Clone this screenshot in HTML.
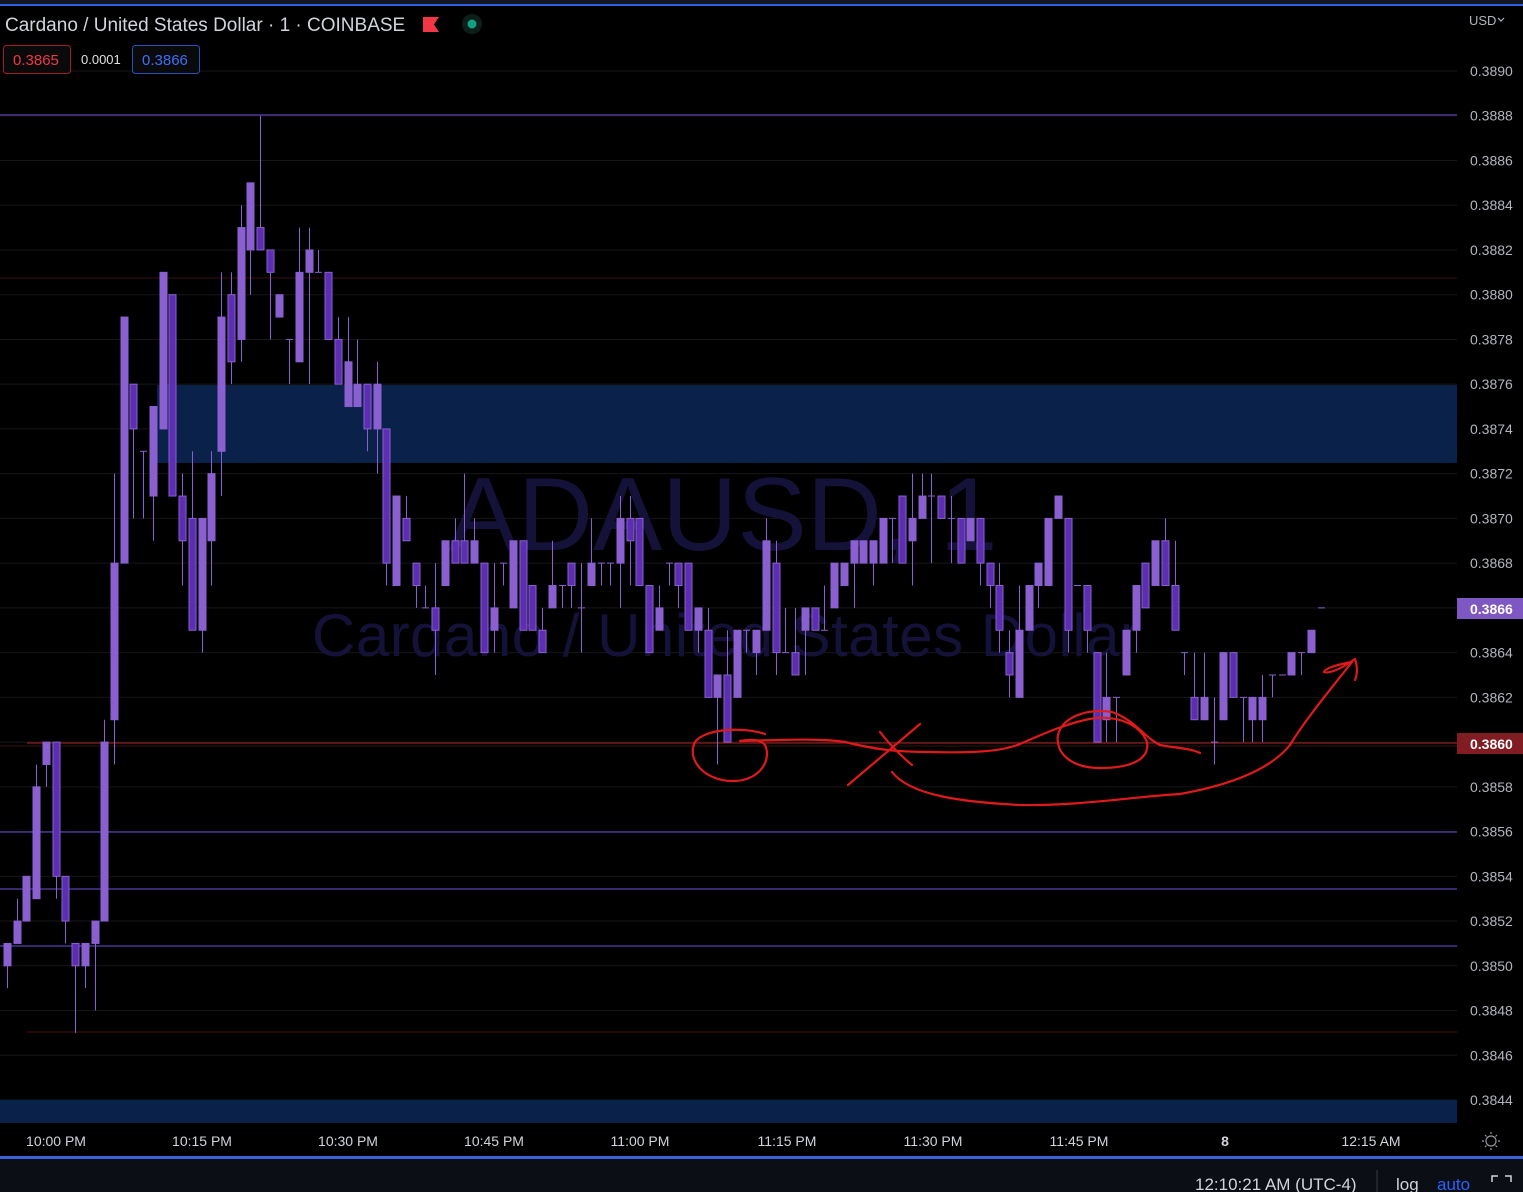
<!DOCTYPE html>
<html><head><meta charset="utf-8">
<style>
html,body{margin:0;padding:0;background:#000;width:1523px;height:1192px;overflow:hidden;font-family:"Liberation Sans",sans-serif;}
svg{position:absolute;left:0;top:0}
</style></head><body>
<svg id="s" width="1523" height="1192" xmlns="http://www.w3.org/2000/svg">
<rect x="0" y="0" width="1523" height="1192" fill="#000"/>
<rect x="0" y="0" width="1523" height="4" fill="#131722"/>
<rect x="0" y="4" width="1523" height="2" fill="#2f5fe0"/>
<g id="grid" stroke="#161616" stroke-width="1"></g>
<text x="723" y="550" font-size="104" fill="#15123a" text-anchor="middle" font-family="Liberation Sans, sans-serif">ADAUSD, 1</text>
<text x="312" y="656" font-size="60" fill="#15123a" font-family="Liberation Sans, sans-serif" textLength="828">Cardano / United States Dollar</text>
<rect x="157" y="385" width="1300" height="78" fill="#0a2249"/>
<rect x="0" y="1100" width="1457" height="23" fill="#0a2249"/>
<line x1="0" y1="115" x2="1457" y2="115" stroke="#5b3fb0" stroke-width="1.2"/>
<line x1="0" y1="278" x2="1457" y2="278" stroke="#3a1010" stroke-width="1"/>
<line x1="27" y1="743" x2="1457" y2="743" stroke="#8b1c1c" stroke-width="1.3"/>
<line x1="0" y1="746" x2="1457" y2="746" stroke="#3a1010" stroke-width="1"/>
<line x1="0" y1="832" x2="1457" y2="832" stroke="#5b3fb0" stroke-width="1.2"/>
<line x1="0" y1="889" x2="1457" y2="889" stroke="#5b3fb0" stroke-width="1.2"/>
<line x1="0" y1="946" x2="1457" y2="946" stroke="#5b3fb0" stroke-width="1.2"/>
<line x1="27" y1="1032" x2="1457" y2="1032" stroke="#4a1414" stroke-width="1"/>
<g id="candles"></g>
<g fill="none" stroke="#e01a1a" stroke-width="2.2" stroke-linecap="round" stroke-linejoin="round">
<path d="M765 734 C745 727,705 728,695 742 C686 760,705 782,735 781 C760 780,772 760,765 745 C760 738,745 740,740 741 C780 740,820 738,845 742 C870 748,890 752,930 752 C970 753,1000 752,1020 744 C1045 733,1070 722,1095 718 C1120 716,1140 725,1147 742 C1150 760,1130 768,1100 768 C1070 768,1055 752,1058 735 C1062 718,1085 708,1112 712 C1135 720,1145 738,1160 745 C1175 748,1190 748,1200 753"/>
<path d="M920 724 L848 785"/>
<path d="M880 732 C890 745,900 755,912 765"/>
<path d="M892 772 C910 795,960 802,1020 805 C1080 806,1130 797,1180 794 C1230 785,1270 770,1290 745 C1305 720,1330 690,1352 662"/>
<path d="M1352 662 C1340 664,1325 668,1324 672 C1330 674,1342 668,1355 659 C1358 668,1357 675,1355 680"/>
</g>
<g id="axis" font-size="14" fill="#b2b5be" font-family="Liberation Sans, sans-serif"></g>
<rect x="1457" y="598" width="66" height="21" fill="#7e57c2"/>
<text x="1470" y="614" font-size="14" fill="#fff" font-weight="bold">0.3866</text>
<rect x="1457" y="733" width="66" height="21" fill="#801c22"/>
<text x="1470" y="749" font-size="14" fill="#fff" font-weight="bold">0.3860</text>
<text x="1469" y="25" font-size="13" fill="#b2b5be">USD</text>
<path d="M1498 18 l3 3 l3 -3" stroke="#b2b5be" fill="none" stroke-width="1.2"/>
<g font-size="14" fill="#d1d4dc" text-anchor="middle">
<text x="56" y="1146">10:00 PM</text>
<text x="202" y="1146">10:15 PM</text>
<text x="348" y="1146">10:30 PM</text>
<text x="494" y="1146">10:45 PM</text>
<text x="640" y="1146">11:00 PM</text>
<text x="787" y="1146">11:15 PM</text>
<text x="933" y="1146">11:30 PM</text>
<text x="1079" y="1146">11:45 PM</text>
<text x="1225" y="1146" font-weight="bold">8</text>
<text x="1371" y="1146">12:15 AM</text>
</g>
<g stroke="#9598a1" stroke-width="1.2" fill="none">
<circle cx="1491" cy="1141" r="5"/>
<path d="M1491 1132v2M1491 1148v2M1482 1141h2M1498 1141h2M1485 1135l1.5 1.5M1495.5 1145.5l1.5 1.5M1485 1147l1.5-1.5M1495.5 1136.5l1.5-1.5"/>
</g>
<rect x="0" y="1156" width="1523" height="36" fill="#0c0e15"/>
<rect x="0" y="1156" width="1523" height="3" fill="#3a62d8"/>
<text x="1195" y="1190" font-size="17" fill="#d1d4dc">12:10:21 AM (UTC-4)</text>
<line x1="1377" y1="1170" x2="1377" y2="1192" stroke="#363a45"/>
<text x="1396" y="1190" font-size="17" fill="#d1d4dc">log</text>
<text x="1437" y="1190" font-size="17" fill="#2962ff">auto</text>
<path d="M1492 1182v-6h6M1505 1176h6v6" stroke="#d1d4dc" stroke-width="1.5" fill="none"/>
<text x="5" y="31" font-size="19" fill="#d1d4dc">Cardano / United States Dollar · 1 · COINBASE</text>
<path d="M423 17h16l-5 7.5 5 7.5h-16z" fill="#f23645"/>
<circle cx="472" cy="24" r="10" fill="#0c1f1a"/>
<circle cx="472" cy="24" r="4.5" fill="#13a07f"/>
<rect x="3.5" y="45.5" width="67" height="28" rx="3" fill="#0a0a0a" stroke="#a01c28"/>
<text x="13" y="65" font-size="15" fill="#f23645">0.3865</text>
<text x="81" y="64" font-size="13" fill="#e0e0e0">0.0001</text>
<rect x="132.5" y="45.5" width="67" height="28" rx="3" fill="#0a0a0a" stroke="#2a4fc0"/>
<text x="142" y="65" font-size="15" fill="#3d6fff">0.3866</text>
</svg>
<script>
(function(){
var NS="http://www.w3.org/2000/svg";
function Y(n){return 71+(50-n)*22.37;}
function el(t,a,p){var e=document.createElementNS(NS,t);for(var k in a)e.setAttribute(k,a[k]);p.appendChild(e);return e;}
var g=document.getElementById('grid');
for(var n=50;n>=4;n-=2){var y=Y(n);el('line',{x1:0,y1:y,x2:1457,y2:y},g);}
var ax=document.getElementById('axis');
for(var n=50;n>=4;n-=2){if(n==26||n==20)continue;var p=(0.3840+n*0.0001).toFixed(4);var t=el('text',{x:1470,y:Y(n)+5},ax);t.textContent=p;}
var C=[
[10,11,11,9],[11,12,13,11],[12,14,14,12],[13,18,19,13],[19,20,20,18],[20,14,20,13],[14,12,14,11],[11,10,11,7],[10,11,11,9],[11,12,12,8],
[12,20,21,12],[21,28,32,19],[28,39,39,28],[36,34,36,30],[33,33,33,30],[31,35,35,29],[34,41,41,34],[40,31,40,31],[31,29,32,27],[30,25,33,25],
[25,30,30,24],[29,32,33,27],[33,39,41,31],[40,37,41,36],[38,43,44,37],[42,45,45,40],[43,42,48,42],[42,41,42,38],[39,40,40,39],[38,38,38,36],
[37,41,43,37],[41,42,43,36],[41,41,42,41],[41,38,41,38],[38,36,39,36],[35,37,39,35],[35,36,38,35],[36,34,36,33],[34,36,37,32],[34,28,34,27],
[27,31,31,27],[30,29,31,29],[28,27,28,26],[26,26,27,26],[26,25,28,23],[27,29,29,27],[29,28,30,28],
[29,28,32,28],[28,29,30,28],[28,24,28,24],[25,26,28,24],[28,28,28,27],[26,29,29,26],[29,25,29,25],[27,25,27,25],[25,24,26,24],[26,27,29,26],
[27,27,27,26],[28,27,28,26],[26,26,28,24],[27,28,30,27],[28,28,28,27],[28,28,28,27],[28,30,31,26],[30,29,31,27],[30,27,30,27],[27,24,27,24],
[25,26,27,25],[28,28,28,27],[28,27,28,26],[28,25,28,25],[25,26,26,24],[25,22,26,22],[22,23,23,19],[23,20,25,20],[22,25,25,22],[25,25,25,24],
[24,25,25,23],[25,29,30,25],[28,24,29,23],[24,24,26,24],[24,23,26,23],[25,26,26,23],[26,25,26,25],[25,25,27,25],[26,28,28,26],[27,28,28,27],
[28,29,29,26],[28,29,29,28],[28,29,29,27],[28,30,30,28],[30,30,30,28],
[31,28,31,28],[29,30,32,27],[30,31,32,30],[31,31,32,28],[31,30,31,30],[30,30,31,28],[30,28,30,28],[29,30,30,29],[30,28,30,27],[28,27,28,26],
[27,25,28,24],[24,23,25,22],[22,25,27,22],[25,27,27,25],[27,28,28,26],[27,30,30,27],[30,31,31,30],[30,25,30,24],[27,27,27,27],[27,25,27,24],
[24,20,24,20],[21,22,24,20],[22,22,22,20],[23,25,25,23],[25,27,27,24],[28,26,28,26],[27,29,29,27],[29,27,30,27],[27,25,29,25],[24,24,24,23],
[22,21,24,21],[21,22,24,21],[20,20,22,19],[21,24,24,21],[24,22,24,22],[22,22,22,20],[21,22,22,20],[21,22,23,20],[23,23,23,22],[23,23,23,23],
[23,24,24,23],[24,24,24,23],[24,25,25,24],[26,26,26,26]
];
var cg=document.getElementById('candles');
for(var i=0;i<C.length;i++){
 var c=C[i],x=Math.round(7+i*9.73),o=c[0],cl=c[1],h=c[2],l=c[3];
 var bull=cl>=o, col='#8a5fd0';
 el('line',{x1:x+0.5,y1:Y(h),x2:x+0.5,y2:Y(l),stroke:col,'stroke-width':1},cg);
 var yt=Y(Math.max(o,cl)),yb=Y(Math.min(o,cl));
 if(o==cl){el('line',{x1:x-3,y1:yt,x2:x+4,y2:yt,stroke:col,'stroke-width':1},cg);continue;}
 el('rect',{x:x-3,y:yt,width:7,height:yb-yt,fill:bull?'#8a5fd0':'#5b2eb2',stroke:'#8a5fd0','stroke-width':1},cg);
}
})();
</script>
</body></html>
